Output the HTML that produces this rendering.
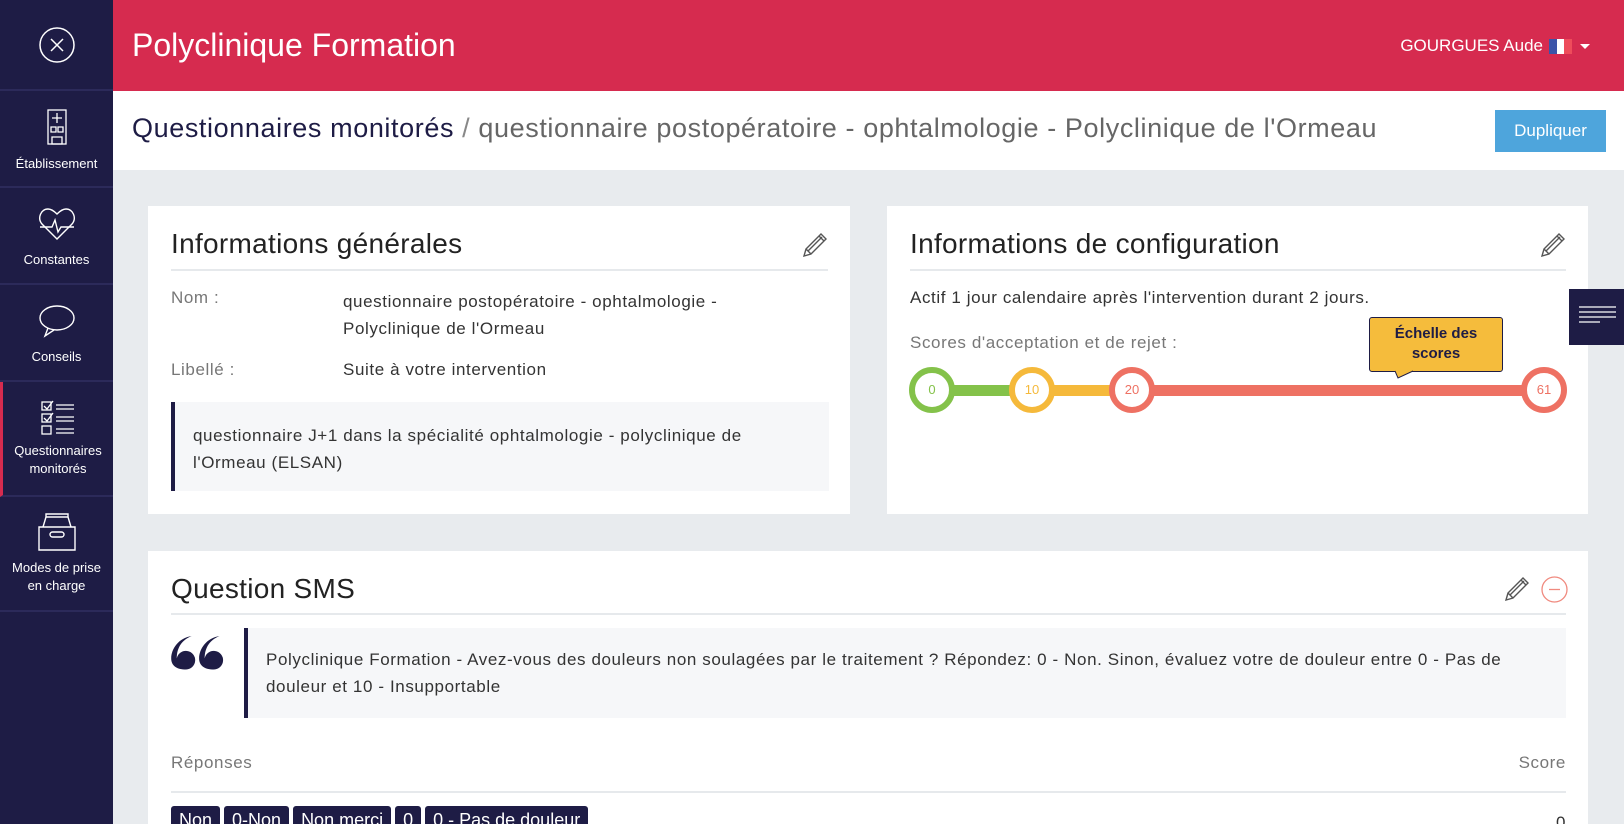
<!DOCTYPE html>
<html><head><meta charset="utf-8"><style>
*{box-sizing:border-box;margin:0;padding:0}
html,body{width:1624px;height:824px;overflow:hidden}
body{background:#e8ebee;font-family:"Liberation Sans",sans-serif;color:#222;position:relative}
.side{position:absolute;left:0;top:0;width:113px;height:824px;background:#1e1c45;color:#fff}
.si{position:absolute;left:0;width:113px;border-bottom:2px solid #2c2a5a;text-align:center;font-size:13px;line-height:18px}
.si svg{display:block;margin:0 auto}
.hdr{position:absolute;left:113px;top:0;right:0;height:91px;background:#d62b4f;color:#fff}
.sub{position:absolute;left:113px;top:91px;right:0;height:79px;background:#fff}
.card{position:absolute;background:#fff}
.ct{position:absolute;left:23px;font-size:28px;color:#222;font-weight:300;letter-spacing:0.3px}
.hr{position:absolute;height:2px;background:#e6e9ec}
.t{position:absolute;font-size:17px;letter-spacing:0.6px;color:#333;white-space:nowrap}
.g{color:#777}
.circ{position:absolute;width:46px;height:46px;border-radius:50%;background:#fff;border:6px solid;font-size:13px;text-align:center;line-height:34px;top:367px}
.tag{display:inline-block;background:#1e1c45;color:#fff;font-size:18px;padding:4px 8px;border-radius:3px;margin-right:4px;height:30px}
</style></head><body>
<div class="side">
 <div class="si" style="top:0;height:91px"><svg width="36" height="36" style="margin-top:27px" viewBox="0 0 36 36" fill="none" stroke="#fff" stroke-width="1.5"><circle cx="18" cy="18" r="17"/><path d="M12 12l12 12M24 12l-12 12"/></svg></div>
 <div class="si" style="top:91px;height:97px"><svg width="20" height="36" style="margin-top:18px" viewBox="0 0 20 36" fill="none" stroke="#fff" stroke-width="1.3"><rect x="1" y="1" width="18" height="34"/><path d="M10 4v10M5 9h10M4 18h5v5H4zM11 18h5v5h-5zM5 28h10v7H5z"/></svg><div style="margin-top:10px">Établissement</div></div>
 <div class="si" style="top:188px;height:97px"><svg width="38" height="34" style="margin-top:19px" viewBox="0 0 38 34" fill="none" stroke="#fff" stroke-width="1.4"><path d="M19 32L4 17C-1 11 3 2 10 2c4 0 7 3 9 5 2-2 5-5 9-5 7 0 11 9 6 15z"/><path d="M2 20h12l3-7 3 12 3-5h13"/></svg><div style="margin-top:10px">Constantes</div></div>
 <div class="si" style="top:285px;height:97px"><svg width="38" height="34" style="margin-top:19px" viewBox="0 0 38 34" fill="none" stroke="#fff" stroke-width="1.4"><ellipse cx="19" cy="14" rx="17" ry="12"/><path d="M10 24l-3 8 9-6"/></svg><div style="margin-top:10px">Conseils</div></div>
 <div class="si" style="top:382px;height:115px;border-left:3px solid #d62b4f"><svg width="36" height="36" style="margin-top:18px" viewBox="0 0 36 36" fill="none" stroke="#fff" stroke-width="1.3"><rect x="2" y="2" width="9" height="8"/><rect x="2" y="14" width="9" height="8"/><rect x="2" y="26" width="9" height="8"/><path d="M4 6l3 3 6-8M4 18l3 3 6-8M16 5h18M16 9h18M16 17h18M16 21h18M16 29h18M16 33h18"/></svg><div style="margin-top:6px">Questionnaires<br>monitorés</div></div>
 <div class="si" style="top:497px;height:115px"><svg width="38" height="38" style="margin-top:16px" viewBox="0 0 38 38" fill="none" stroke="#fff" stroke-width="1.4"><path d="M1 14h36v23H1zM5 14l3-10h22l3 10M8 4V1h22v3"/><rect x="12" y="19" width="14" height="5" rx="2.5"/></svg><div style="margin-top:8px">Modes de prise<br>en charge</div></div>
</div>
<div class="hdr">
 <div style="position:absolute;left:19px;top:27px;font-size:32px;font-weight:300">Polyclinique Formation</div>
 <div style="position:absolute;right:81px;top:36px;font-size:17px">GOURGUES Aude</div>
 <div style="position:absolute;right:52px;top:39px;width:23px;height:15px;display:flex"><div style="flex:1;background:#3b54a8"></div><div style="flex:1;background:#fff"></div><div style="flex:1;background:#ee4c5b"></div></div>
 <div style="position:absolute;right:34px;top:44px;width:0;height:0;border-left:5px solid transparent;border-right:5px solid transparent;border-top:5px solid #fff"></div>
</div>
<div class="sub">
 <div style="position:absolute;left:19px;top:22px;font-size:27px;letter-spacing:0.6px;white-space:nowrap;color:#1e1c45;font-weight:300">Questionnaires monitorés <span style="color:#888">/</span> <span style="color:#666">questionnaire postopératoire - ophtalmologie - Polyclinique de l'Ormeau</span></div>
 <div style="position:absolute;left:1382px;top:19px;width:111px;height:42px;background:#4ea5dc;color:#fff;font-size:17px;text-align:center;line-height:42px">Dupliquer</div>
</div>
<div class="card" style="left:148px;top:206px;width:702px;height:308px">
 <div class="ct" style="top:22px">Informations générales</div>
 <svg style="position:absolute;right:22px;top:26px" width="26" height="26" viewBox="0 0 26 26" fill="none" stroke="#555" stroke-width="1.4"><path d="M2 24l2-7L19 2l5 5L9 22zM4 17l5 5M17 4l5 5M6 19L20 5"/></svg>
 <div class="hr" style="left:23px;right:22px;top:63px"></div>
 <div class="t g" style="left:23px;top:82px">Nom :</div>
 <div class="t" style="left:195px;top:82px;line-height:27px">questionnaire postopératoire - ophtalmologie -<br>Polyclinique de l'Ormeau</div>
 <div class="t g" style="left:23px;top:154px">Libellé :</div>
 <div class="t" style="left:195px;top:154px">Suite à votre intervention</div>
 <div style="position:absolute;left:23px;top:196px;width:658px;height:89px;background:#f6f7f9;border-left:4px solid #1e1c45"></div>
 <div class="t" style="left:45px;top:216px;line-height:27px">questionnaire J+1 dans la spécialité ophtalmologie - polyclinique de<br>l'Ormeau (ELSAN)</div>
</div>
<div class="card" style="left:887px;top:206px;width:701px;height:308px">
 <div class="ct" style="top:22px">Informations de configuration</div>
 <svg style="position:absolute;right:22px;top:26px" width="26" height="26" viewBox="0 0 26 26" fill="none" stroke="#555" stroke-width="1.4"><path d="M2 24l2-7L19 2l5 5L9 22zM4 17l5 5M17 4l5 5M6 19L20 5"/></svg>
 <div class="hr" style="left:23px;right:22px;top:63px"></div>
 <div class="t" style="left:23px;top:82px">Actif 1 jour calendaire après l'intervention durant 2 jours.</div>
 <div class="t g" style="left:23px;top:127px">Scores d'acceptation et de rejet :</div>
</div>
<div style="position:absolute;left:932px;top:385px;width:100px;height:11px;background:#84c24a"></div>
<div style="position:absolute;left:1032px;top:385px;width:100px;height:11px;background:#f5b93b"></div>
<div style="position:absolute;left:1132px;top:385px;width:412px;height:11px;background:#ee7163"></div>
<div class="circ" style="left:909px;border-color:#84c24a;color:#84c24a">0</div>
<div class="circ" style="left:1009px;border-color:#f5b93b;color:#f5b93b">10</div>
<div class="circ" style="left:1109px;border-color:#ee7163;color:#ee7163">20</div>
<div class="circ" style="left:1521px;border-color:#ee7163;color:#ee7163">61</div>
<div style="position:absolute;left:1369px;top:317px;width:134px;height:55px;background:#f5bc3c;border:1px solid #1e1c45;border-radius:3px;color:#1e1c45;font-weight:bold;font-size:15px;text-align:center;line-height:20px;padding-top:6px">Échelle des<br>scores</div>
<svg style="position:absolute;left:1395px;top:370px" width="20" height="9" viewBox="0 0 20 9"><path d="M0 1L3 8 18 1" fill="#f5bc3c" stroke="#1e1c45"/></svg>
<div style="position:absolute;left:1569px;top:289px;width:55px;height:56px;background:#1e1c45"><svg width="55" height="56" viewBox="0 0 55 56" stroke="#fff" stroke-width="1.3"><path d="M10 18h37M10 23h37M10 28h37M10 33h21"/></svg></div>
<div class="card" style="left:148px;top:551px;width:1440px;height:300px">
 <div class="ct" style="top:22px">Question SMS</div>
 <svg style="position:absolute;right:58px;top:25px" width="26" height="26" viewBox="0 0 26 26" fill="none" stroke="#555" stroke-width="1.4"><path d="M2 24l2-7L19 2l5 5L9 22zM4 17l5 5M17 4l5 5M6 19L20 5"/></svg>
 <svg style="position:absolute;right:20px;top:25px" width="27" height="27" viewBox="0 0 27 27" fill="none" stroke="#f08a7f" stroke-width="1.3"><circle cx="13.5" cy="13.5" r="12.5"/><path d="M8 13.5h11"/></svg>
 <div class="hr" style="left:23px;right:22px;top:62px"></div>
 <svg style="position:absolute;left:23px;top:85px;transform:scaleX(-1)" width="56" height="36" viewBox="0 0 56 36" fill="#1e1c45"><path d="M14 36a10 10 0 1 1 10-12c0-12-6-20-16-24 14 2 22 14 22 24 0 8-6 12-16 12zM44 36a10 10 0 1 1 10-12c0-12-6-20-16-24 14 2 22 14 22 24 0 8-6 12-16 12z" transform="scale(0.93)"/></svg>
 <div style="position:absolute;left:96px;top:77px;width:1322px;height:90px;background:#f6f7f9;border-left:4px solid #1e1c45"></div>
 <div class="t" style="left:118px;top:95px;line-height:27px">Polyclinique Formation - Avez-vous des douleurs non soulagées par le traitement ? Répondez: 0 - Non. Sinon, évaluez votre de douleur entre 0 - Pas de<br>douleur et 10 - Insupportable</div>
 <div class="t g" style="left:23px;top:202px;font-size:17px">Réponses</div>
 <div class="t g" style="right:22px;top:202px;font-size:17px">Score</div>
 <div class="hr" style="left:23px;right:22px;top:240px"></div>
 <div style="position:absolute;left:23px;top:255px;white-space:nowrap"><span class="tag">Non</span><span class="tag">0-Non</span><span class="tag">Non merci</span><span class="tag">0</span><span class="tag">0 - Pas de douleur</span></div>
 <div class="t" style="right:22px;top:262px">0</div>
</div>
</body></html>
